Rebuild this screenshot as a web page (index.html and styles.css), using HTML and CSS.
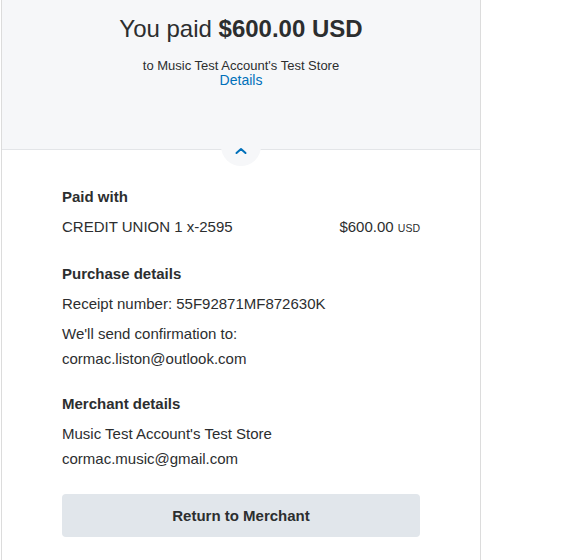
FILE: index.html
```html
<!DOCTYPE html>
<html lang="en">
<head>
<meta charset="utf-8">
<title>Payment receipt</title>
<link rel="stylesheet" href="styles.css">
</head>
<body>
<div class="card">
  <header class="summary">
    <h1 class="title">You paid <strong>$600.00 USD</strong></h1>
    <p class="to">to Music Test Account's Test Store</p>
    <a class="details-link" href="#">Details</a>
    <span class="toggle">
      <svg width="12" height="8" viewBox="0 0 12 8"><path d="M1.5 6 L6 2 L10.5 6" fill="none" stroke="#0070ba" stroke-width="2" stroke-linecap="round" stroke-linejoin="round"/></svg>
    </span>
  </header>
  <main class="content">
    <section class="section">
      <h2 class="heading">Paid with</h2>
      <div class="row">
        <span>CREDIT UNION 1 x-2595</span>
        <span>$600.00 <span class="cur">USD</span></span>
      </div>
    </section>
    <section class="section">
      <h2 class="heading">Purchase details</h2>
      <p class="line gap">Receipt number: 55F92871MF872630K</p>
      <p class="line">We'll send confirmation to:</p>
      <p class="line">cormac.liston@outlook.com</p>
    </section>
    <section class="section">
      <h2 class="heading">Merchant details</h2>
      <p class="line">Music Test Account's Test Store</p>
      <p class="line">cormac.music@gmail.com</p>
    </section>
    <button class="return" type="button">Return to Merchant</button>
  </main>
</div>
</body>
</html>
```

FILE: styles.css
```css
html, body {
  margin: 0;
  padding: 0;
  background: #ffffff;
}
body {
  font-family: "Liberation Sans", Arial, sans-serif;
  color: #2c2e2f;
}
.card {
  margin-left: 1px;
  width: 480px;
  min-height: 560px;
  box-sizing: border-box;
  border-left: 1px solid #dcdcdc;
  border-right: 1px solid #dcdcdc;
  background: #ffffff;
}
.summary {
  position: relative;
  height: 150px;
  box-sizing: border-box;
  padding-top: 15px;
  background: #f6f7f9;
  border-bottom: 1px solid #e3e5e8;
  text-align: center;
}
.title {
  margin: 0 0 16px;
  font-size: 24px;
  line-height: 28px;
  font-weight: normal;
}
.title strong {
  font-weight: bold;
}
.to {
  margin: 0;
  font-size: 13px;
  line-height: 14px;
}
.details-link {
  display: block;
  font-size: 14px;
  line-height: 14px;
  color: #0070ba;
  text-decoration: none;
}
.toggle {
  position: absolute;
  left: 219px;
  top: 126px;
  width: 40px;
  height: 40px;
  border-radius: 50%;
  background: #f6f7f9;
  display: flex;
  align-items: center;
  justify-content: center;
}
.toggle svg {
  display: block;
  margin-top: 10px;
}
.content {
  padding: 34px 60px 20px;
}
.section {
  margin-bottom: 20px;
}
.heading {
  margin: 0 0 5px;
  font-size: 15px;
  line-height: 25px;
  font-weight: bold;
}
.row {
  display: flex;
  justify-content: space-between;
  font-size: 15px;
  line-height: 25px;
}
.cur {
  font-size: 10.5px;
}
.line {
  margin: 0;
  font-size: 15px;
  line-height: 25px;
}
.line.gap {
  margin-bottom: 5px;
}
.return {
  display: block;
  width: 100%;
  height: 43px;
  margin-top: 23px;
  border: none;
  border-radius: 4px;
  background: #e1e6eb;
  color: #2c2e2f;
  font-family: "Liberation Sans", Arial, sans-serif;
  font-size: 15px;
  font-weight: bold;
  cursor: pointer;
}
```
